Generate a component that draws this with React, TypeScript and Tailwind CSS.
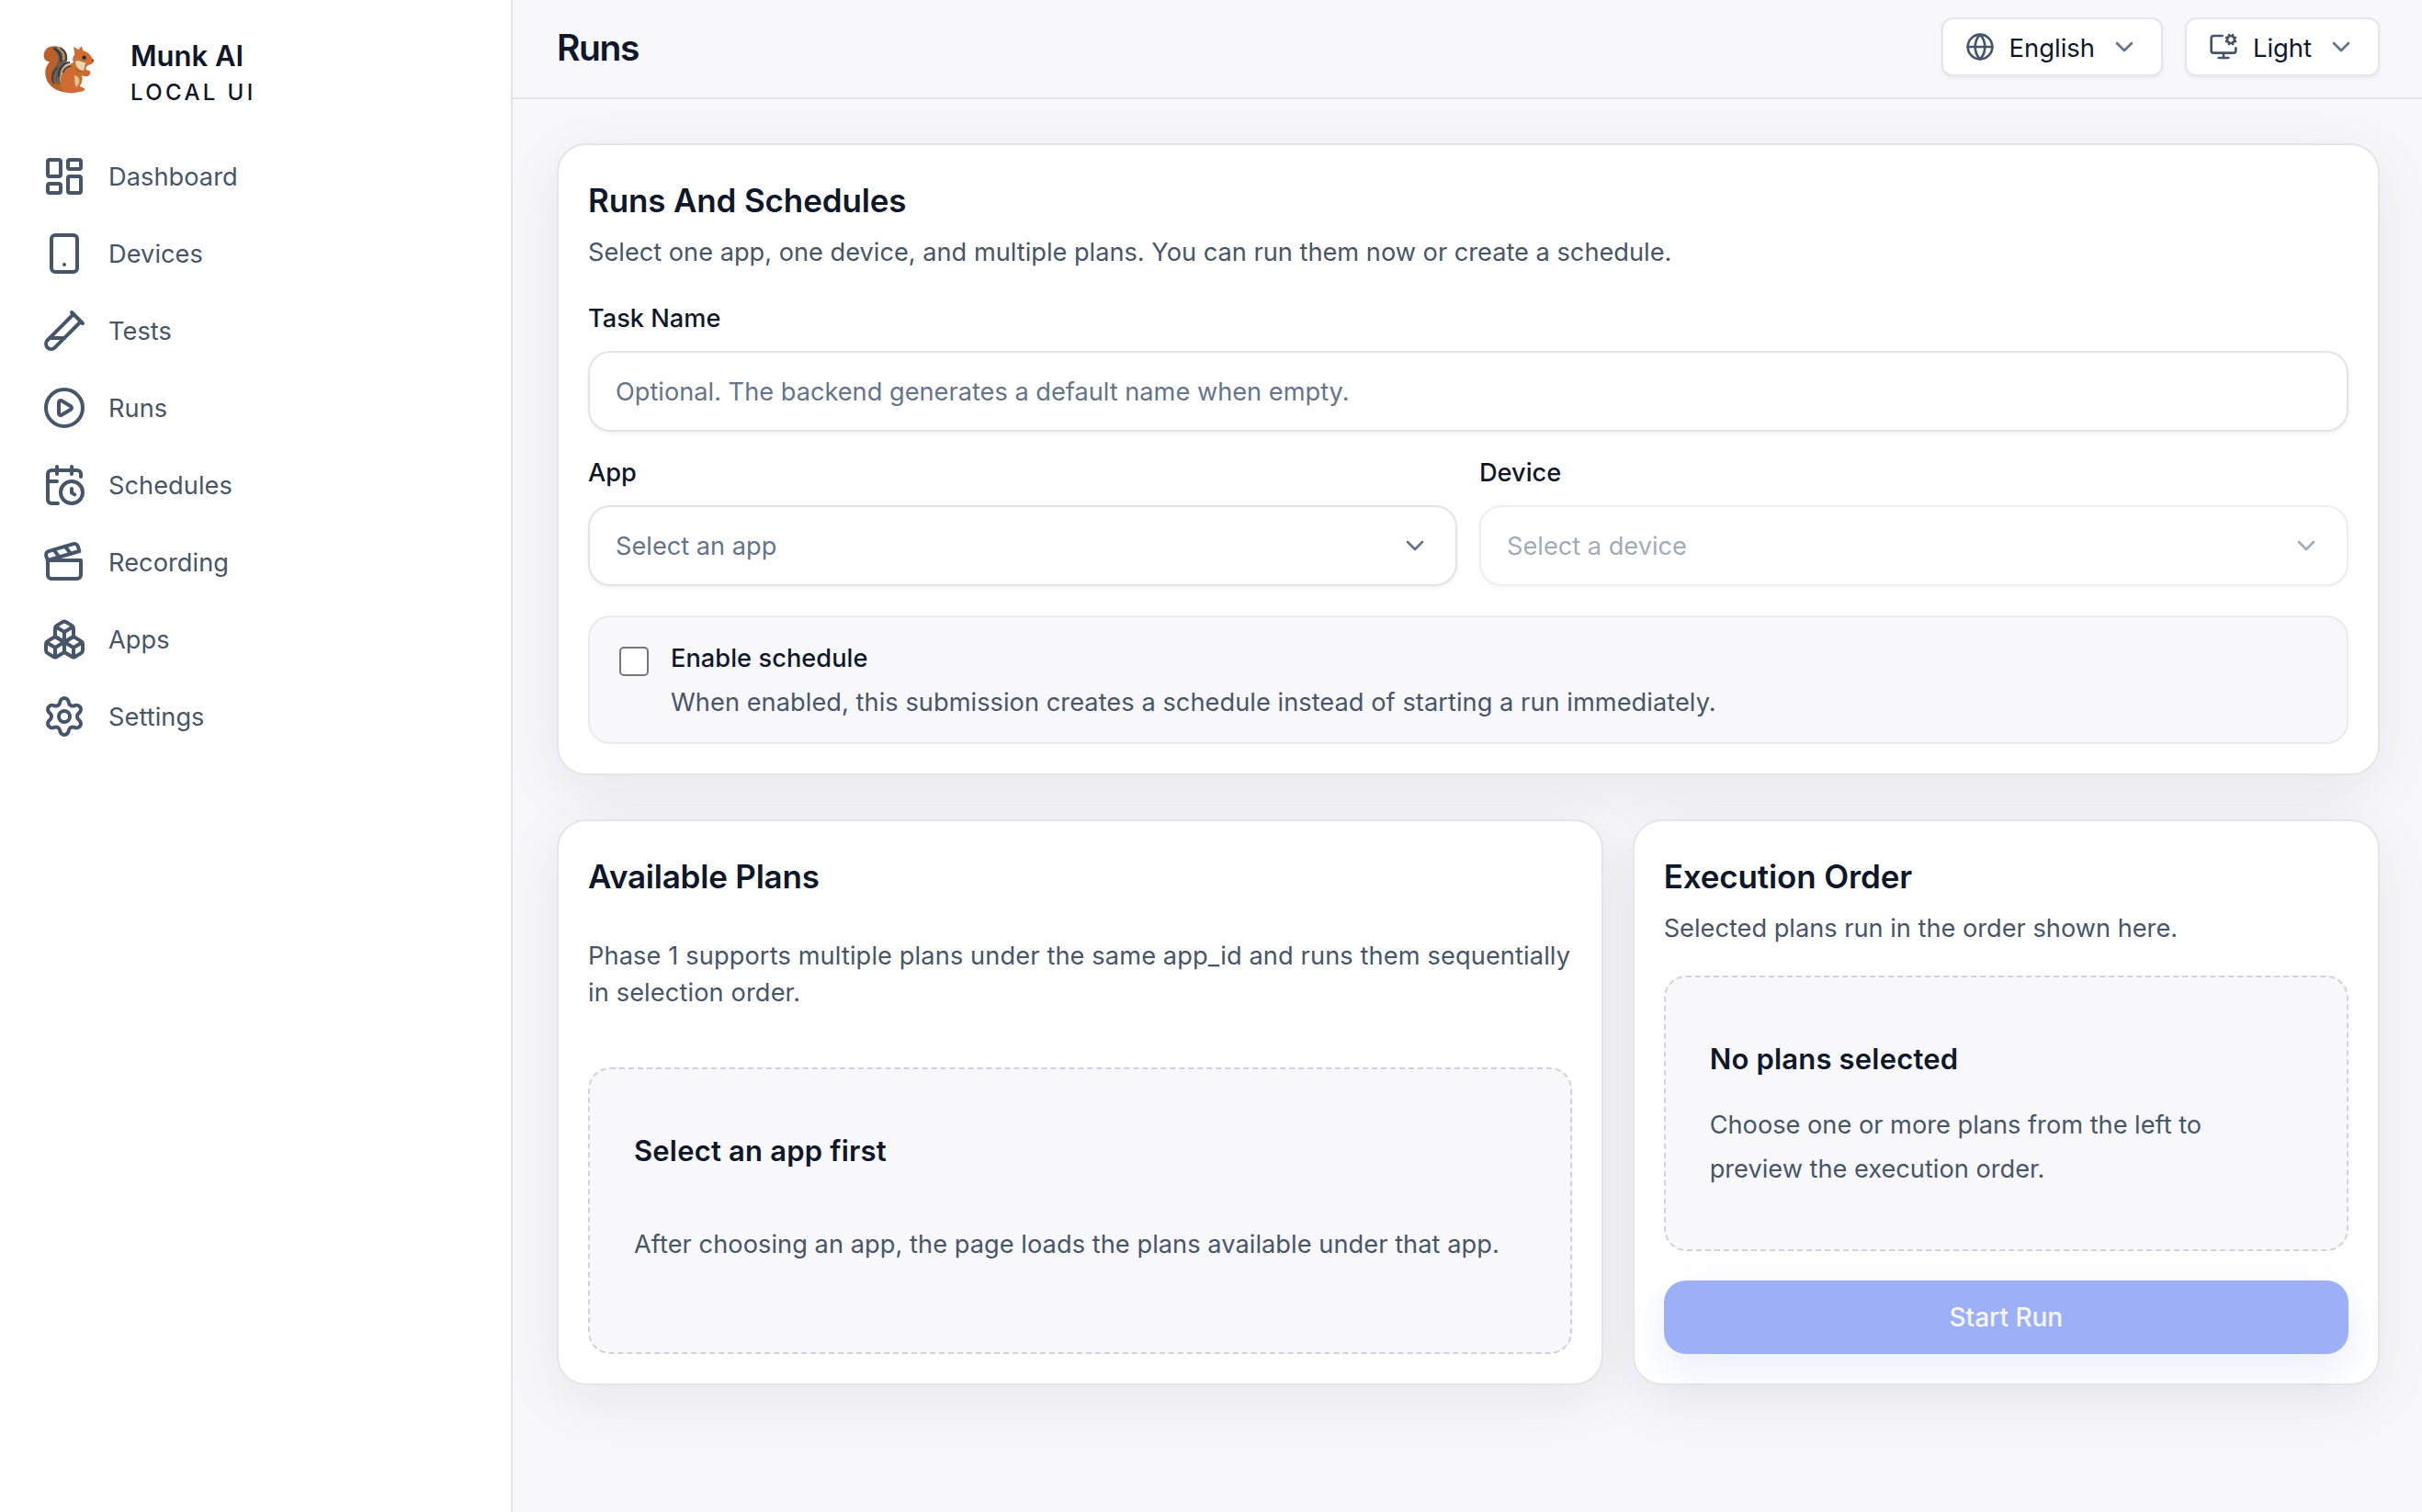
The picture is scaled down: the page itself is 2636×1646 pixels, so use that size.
import type { ReactNode } from "react";
import {
    Boxes,
    CalendarClock,
    ChevronDown,
    CirclePlay,
    Clapperboard,
    Globe,
    LayoutDashboard,
    MonitorCog,
    Settings,
    Smartphone,
    TestTubeDiagonal,
} from "lucide-react";

const navItems = [
    { label: "Dashboard", icon: LayoutDashboard },
    { label: "Devices", icon: Smartphone },
    { label: "Tests", icon: TestTubeDiagonal },
    { label: "Runs", icon: CirclePlay },
    { label: "Schedules", icon: CalendarClock },
    { label: "Recording", icon: Clapperboard },
    { label: "Apps", icon: Boxes },
    { label: "Settings", icon: Settings },
];

function SquirrelLogo() {
    return (
        <svg viewBox="18 18 168 168" className="h-14 w-14 shrink-0">
            {/* Tail */}
            <path
                d="M104 176C62 176 28 150 28 112c0-18 8-28 14-37-12 1-19-8-19-20 0-18 14-30 32-30 14 0 24 5 32 14l4 45-20 50z"
                fill="#bd5f2b"
            />
            <path
                d="M50 30c22-10 50 2 50 34 0 16-8 24-16 36-8 14-10 32-6 52-16-2-28-14-30-32-2-22 22-32 22-54 0-14-8-24-20-36z"
                fill="#6d5f50"
            />
            <path d="M56 32c16 8 26 24 22 44" fill="none" stroke="#2a2d38" strokeWidth="5" />
            <path d="M68 29c16 8 24 24 20 40" fill="none" stroke="#c39f78" strokeWidth="5" />
            <path d="M77 31c16 10 22 24 18 40" fill="none" stroke="#3a3838" strokeWidth="4" />
            <path d="M56 148c-10-16-6-36 12-54" fill="none" stroke="#4a4038" strokeWidth="5" />
            {/* Body and head */}
            <path
                d="M124 52l-4-26 16 10 10-11 6 15c14 3 25 14 32 29 5 10-4 14-16 18-6 4-8 8-7 14l12 5c5 8-1 18-12 18l-14-3c4 14 0 24-7 34l16 8c2 8-6 11-18 11l-18 4c-26 2-46-10-44-38 1-32 16-54 44-62-4-10-4-16 4-26z"
                fill="#cf6c32"
            />
            <path d="M126 74c12-6 18 4 34 4-4 10-4 20-8 28-14-4-26-14-26-32z" fill="#ecd5b0" />
            <path d="M122 120c18 2 24 20 8 38-8-8-4-22-8-38z" fill="#e5c596" />
            <path d="M72 126c-4-24 10-46 36-48" fill="none" stroke="#353b4c" strokeWidth="6" />
            <path d="M80 120c0-18 10-34 32-36" fill="none" stroke="#d5b083" strokeWidth="5" />
            <path d="M86 112c2-12 10-20 26-22" fill="none" stroke="#353b4c" strokeWidth="5" />
            <path d="M150 106c-10 2-18 0-24-6" fill="none" stroke="#a34e21" strokeWidth="3" />
            <circle cx="155" cy="62" r="6.500" fill="#1f2a3c" />
            <circle cx="183" cy="71" r="3" fill="#3a2f2f" />
        </svg>
    );
}

function HeaderSelect({ icon, label }: { icon: ReactNode; label: string }) {
    return (
        <button className="flex h-16 items-center gap-4 rounded-xl border-2 border-[#e6e6e9] bg-white px-6 text-[27.4px] text-[#0f172a] shadow-[0_2px_4px_rgba(15,23,42,0.06)]">
            {icon}
            <span className="pt-px">{label}</span>
            <ChevronDown className="size-8 text-[#64748b]" />
        </button>
    );
}

function Card({ className = "", children }: { className?: string; children: ReactNode }) {
    return (
        <section
            className={`rounded-[32px] border-2 border-[#e6e6e9] bg-white px-8 pt-10 pb-8 shadow-[0_16px_64px_rgba(15,23,42,0.08)] ${className}`}
        >
            {children}
        </section>
    );
}

function SelectField({ label, placeholder, disabled }: { label: string; placeholder: string; disabled?: boolean }) {
    return (
        <div className="flex flex-col gap-3.5">
            <span className="leading-[42px] font-medium">{label}</span>
            <button
                disabled={disabled}
                className="flex h-[88px] items-center justify-between rounded-3xl border-2 border-[#e4e4e7] bg-white px-7 text-[#64748b] shadow-[0_2px_4px_rgba(15,23,42,0.06)] disabled:opacity-60"
            >
                <span className="pt-px">{placeholder}</span>
                <ChevronDown className="size-8" />
            </button>
        </div>
    );
}

export default function App() {
    return (
        <div className="flex h-[1646px] w-[2636px] overflow-hidden bg-[#f8f8fb] font-['Inter',sans-serif] text-[27.2px] leading-10 text-[#0f172a]">
            {/* Sidebar */}
            <aside className="w-[558px] shrink-0 border-r-2 border-[#e4e4e7] bg-white">
                <div className="flex items-start gap-10 pt-[41px] pl-[46px]">
                    <div className="pt-[7px]">
                        <SquirrelLogo />
                    </div>
                    <div>
                        <div className="text-[31px] font-semibold">Munk AI</div>
                        <div className="text-2xl leading-10 font-medium tracking-[0.14em]">LOCAL UI</div>
                    </div>
                </div>
                <nav className="mt-[29px] flex flex-col">
                    {navItems.map(({ label, icon: Icon }) => (
                        <a key={label} className="flex h-[84px] items-center gap-6 pl-[46px] text-[#475569]">
                            <Icon className="size-12" />
                            <span className="pt-px tracking-[0.002em]">{label}</span>
                        </a>
                    ))}
                </nav>
            </aside>

            <div className="flex flex-1 flex-col overflow-hidden">
                {/* Header */}
                <header className="flex h-[108px] items-center justify-between border-b-2 border-[#e4e4e7] pr-[46px] pb-1 pl-12">
                    <h1 className="pt-0.5 text-[39px] font-semibold tracking-[-0.035em]">Runs</h1>
                    <div className="flex gap-6">
                        <HeaderSelect icon={<Globe className="size-8 text-[#475569]" />} label="English" />
                        <HeaderSelect icon={<MonitorCog className="size-8 text-[#475569]" />} label="Light" />
                    </div>
                </header>

                <main className="flex flex-col gap-12 pt-12 pr-[46px] pl-12">
                    {/* Run form */}
                    <Card>
                        <h2 className="text-[35px] font-semibold tracking-[-0.004em]">Runs And Schedules</h2>
                        <p className="mt-4 leading-[42px] text-[#475569]">
                            Select one app, one device, and multiple plans. You can run them now or create a schedule.
                        </p>
                        <div className="mt-[30px] flex flex-col gap-3.5">
                            <span className="leading-[42px] font-medium">Task Name</span>
                            <input
                                placeholder="Optional. The backend generates a default name when empty."
                                className="h-[88px] rounded-3xl border-2 border-[#e4e4e7] bg-white px-7 shadow-[0_2px_4px_rgba(15,23,42,0.06)] placeholder:text-[#64748b]"
                            />
                        </div>
                        <div className="mt-6 grid grid-cols-2 gap-6">
                            <SelectField label="App" placeholder="Select an app" />
                            <SelectField label="Device" placeholder="Select a device" disabled />
                        </div>
                        <label className="mt-8 flex h-[140px] items-start gap-6 rounded-3xl border-2 border-[#ebebee] bg-[#f8f8fb] px-8 py-6">
                            <input
                                type="checkbox"
                                className="mt-2 size-8 appearance-none rounded-[5px] border-2 border-[#767676] bg-white"
                            />
                            <span className="flex flex-col gap-1.5 leading-[42px] tracking-[0.002em]">
                                <span className="font-medium">Enable schedule</span>
                                <span className="text-[#475569]">
                                    When enabled, this submission creates a schedule instead of starting a run immediately.
                                </span>
                            </span>
                        </label>
                    </Card>

                    <div className="grid grid-cols-[1.4fr_1fr] gap-8">
                        {/* Plans */}
                        <Card>
                            <h2 className="text-[35px] font-semibold tracking-[-0.006em]">Available Plans</h2>
                            <p className="mt-[47px] tracking-[0.0045em] text-[#475569]">
                                Phase 1 supports multiple plans under the same app_id and runs them sequentially in
                                selection order.
                            </p>
                            <div className="mt-[61px] h-[312px] rounded-3xl border-2 border-dashed border-[#d1d3d9] bg-[#f8f8fb] px-12 py-16">
                                <h3 className="text-[31px] leading-[50px] font-semibold tracking-[0.006em]">
                                    Select an app first
                                </h3>
                                <p className="mt-[53px] leading-[48px] tracking-[0.002em] text-[#475569]">
                                    After choosing an app, the page loads the plans available under that app.
                                </p>
                            </div>
                        </Card>

                        {/* Order */}
                        <Card>
                            <h2 className="text-[35px] font-semibold tracking-[-0.004em]">Execution Order</h2>
                            <p className="mt-4 leading-[42px] text-[#475569]">
                                Selected plans run in the order shown here.
                            </p>
                            <div className="mt-[30px] h-[300px] rounded-3xl border-2 border-dashed border-[#d1d3d9] bg-[#f8f8fb] px-12 py-16">
                                <h3 className="text-[31px] leading-[50px] font-semibold tracking-[0.006em]">
                                    No plans selected
                                </h3>
                                <p className="mt-[23px] max-w-[600px] leading-[48px] text-[#475569]">
                                    Choose one or more plans from the left to preview the execution order.
                                </p>
                            </div>
                            <button
                                disabled
                                className="mt-8 flex h-20 w-full items-center justify-center rounded-3xl bg-[#9db0f7] text-[28px] font-medium text-[#f5f7ff] shadow-[0_16px_40px_rgba(79,110,247,0.12)]"
                            >
                                Start Run
                            </button>
                        </Card>
                    </div>
                </main>
            </div>
        </div>
    );
}
